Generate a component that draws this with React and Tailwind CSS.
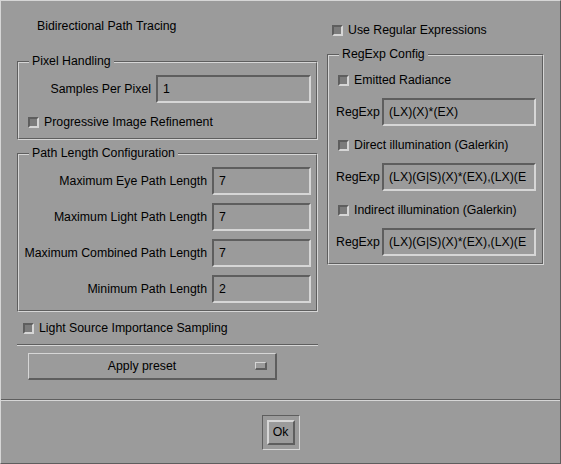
import React from 'react';

const sunken = 'border-2 border-t-[#5e5e5e] border-l-[#5e5e5e] border-b-[#d6d6d6] border-r-[#d6d6d6]';
const raised = 'border-2 border-t-[#d6d6d6] border-l-[#d6d6d6] border-b-[#5e5e5e] border-r-[#5e5e5e]';

function Field({ value, className }) {
    return (
        <div className={`h-[28px] ${sunken} pl-[5px] flex items-center overflow-hidden whitespace-nowrap ${className}`}>
            {value}
        </div>
    );
}

function Check({ label, className = '' }) {
    return (
        <div className={`h-[16px] flex items-center gap-[5px] ${className}`}>
            <div className={`w-[11px] h-[11px] shrink-0 ${sunken} bg-[#7c7c7c]`}></div>
            <span className="whitespace-nowrap">{label}</span>
        </div>
    );
}

function Frame({ title, className = '', innerClass = '', children }) {
    return (
        <div className={`relative border border-t-[#5e5e5e] border-l-[#5e5e5e] border-b-[#d6d6d6] border-r-[#d6d6d6] ${className}`}>
            <div className={`border border-t-[#d6d6d6] border-l-[#d6d6d6] border-b-[#5e5e5e] border-r-[#5e5e5e] ${innerClass}`}>
                {children}
            </div>
            <span className="absolute -top-[9px] left-[11px] h-[16px] leading-[16px] px-[3px] bg-[#9b9b9b] whitespace-nowrap">{title}</span>
        </div>
    );
}

function LabeledField({ label, value, width }) {
    return (
        <div className="flex items-center justify-end gap-[5px]">
            <span className="whitespace-nowrap">{label}</span>
            <Field value={value} className={width} />
        </div>
    );
}

function RegRow({ value, className = '' }) {
    return (
        <div className={`flex items-center ${className}`}>
            <span>RegExp</span>
            <Field value={value} className="w-[154px] ml-auto" />
        </div>
    );
}

export default function App() {
    return (
        <div className="w-[561px] h-[464px] bg-[#9b9b9b] border border-t-[#d6d6d6] border-l-[#d6d6d6] border-b-[#5e5e5e] border-r-[#5e5e5e] text-black text-[12.3px] font-['Liberation_Sans',Arial,sans-serif] flex flex-col">
            <div className="h-[398px] flex pl-[16px] gap-[9px]">
                {/* left column */}
                <div className="w-[301px] flex flex-col">
                    <div className="mt-[16px] h-[18px] leading-[18px] pl-[20px]">Bidirectional Path Tracing</div>

                    <Frame title="Pixel Handling" className="mt-[26px]" innerClass="pt-[12px] pb-[8px] pr-[5px]">
                        <LabeledField label="Samples Per Pixel" value="1" width="w-[155px]" />
                        <Check label="Progressive Image Refinement" className="mt-[11px] pl-[9px]" />
                    </Frame>

                    <Frame title="Path Length Configuration" className="mt-[13px]" innerClass="pt-[12px] pb-[7px] pr-[5px] flex flex-col gap-[8px]">
                        <LabeledField label="Maximum Eye Path Length" value="7" width="w-[99px]" />
                        <LabeledField label="Maximum Light Path Length" value="7" width="w-[99px]" />
                        <LabeledField label="Maximum Combined Path Length" value="7" width="w-[99px]" />
                        <LabeledField label="Minimum Path Length" value="2" width="w-[99px]" />
                    </Frame>

                    <Check label="Light Source Importance Sampling" className="mt-[8px] pl-[6px]" />

                    <div className="mt-[8px] border-t border-b border-t-[#5e5e5e] border-b-[#d6d6d6]"></div>

                    <div className="mt-[7px] ml-[11px] w-[249px] h-[27px] flex items-center border-t border-l border-t-[#d6d6d6] border-l-[#d6d6d6] border-b-2 border-r-2 border-b-[#5e5e5e] border-r-[#5e5e5e]">
                        <span className="flex-1 text-center">Apply preset</span>
                        <div className="w-[12px] h-[8px] mr-[8px] border-t border-l border-t-[#d6d6d6] border-l-[#d6d6d6] border-b-2 border-r-2 border-b-[#5e5e5e] border-r-[#5e5e5e]"></div>
                    </div>
                </div>

                {/* right column */}
                <div className="w-[217px] flex flex-col">
                    <Check label="Use Regular Expressions" className="mt-[21px] pl-[5px]" />

                    <Frame title="RegExp Config" className="mt-[16px]" innerClass="pt-[16px] pb-[7px] pl-[7px] pr-[6px]">
                        <Check label="Emitted Radiance" className="pl-[2px]" />
                        <RegRow value="(LX)(X)*(EX)" className="mt-[10px]" />
                        <Check label="Direct illumination (Galerkin)" className="mt-[11px] pl-[2px]" />
                        <RegRow value="(LX)(G|S)(X)*(EX),(LX)(E" className="mt-[10px]" />
                        <Check label="Indirect illumination (Galerkin)" className="mt-[11px] pl-[2px]" />
                        <RegRow value="(LX)(G|S)(X)*(EX),(LX)(E" className="mt-[10px]" />
                    </Frame>
                </div>
            </div>

            <div className="border-t border-b border-t-[#5e5e5e] border-b-[#d6d6d6]"></div>

            <div className="flex-1 flex justify-center items-start pt-[14px]">
                <div className="p-[4px] border border-t-[#5e5e5e] border-l-[#5e5e5e] border-b-[#d6d6d6] border-r-[#d6d6d6]">
                    <div className={`w-[28px] h-[25px] ${raised} flex items-center justify-center`}>Ok</div>
                </div>
            </div>
        </div>
    );
}
